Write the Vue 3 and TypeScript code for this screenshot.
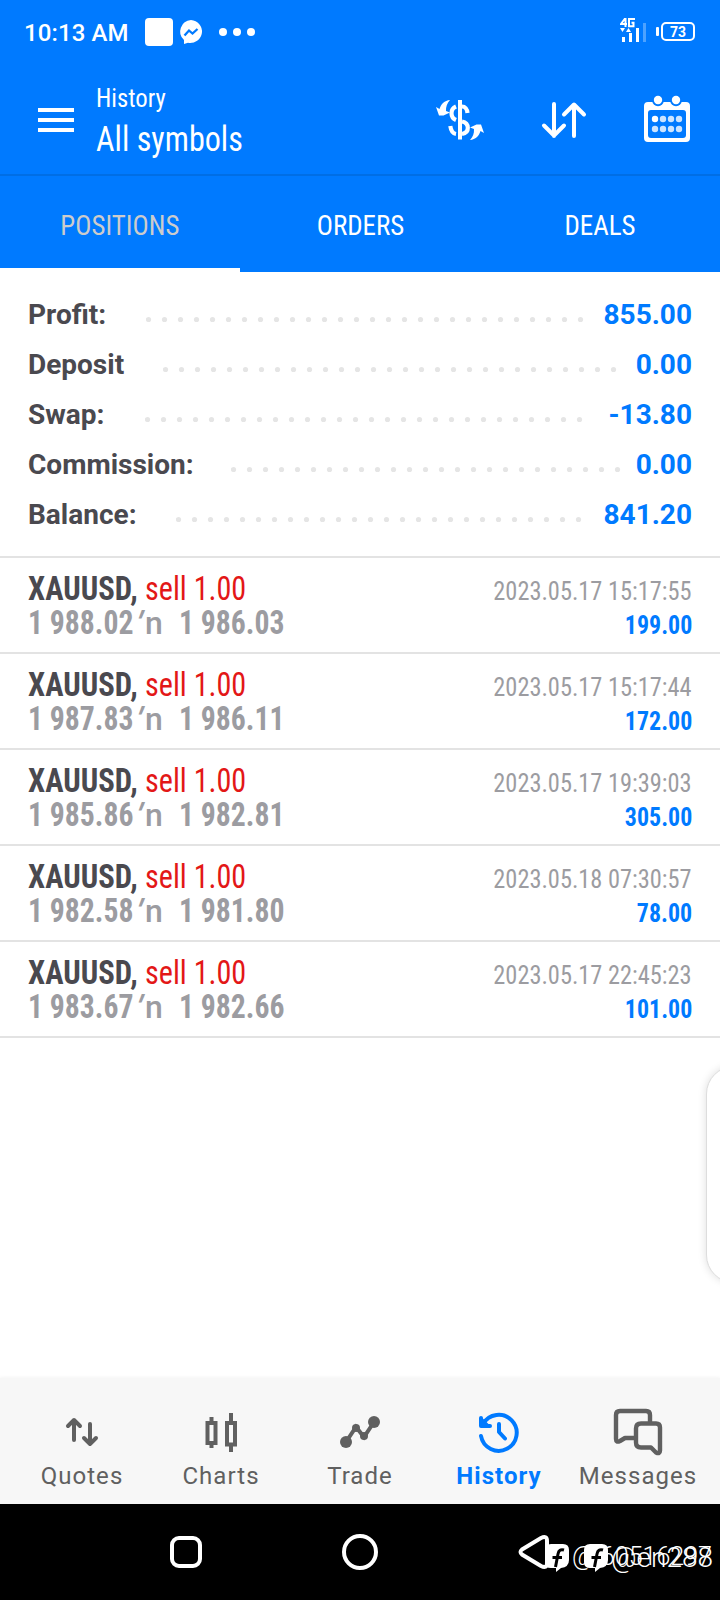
<script setup lang="ts">
interface Total { label: string; value: string; start: number; count: number }
interface Deal { open: string; close: string; time: string; profit: string }

const totals: Total[] = [
  { label: 'Profit:', value: '855.00', start: 146, count: 28 },
  { label: 'Deposit', value: '0.00', start: 163, count: 29 },
  { label: 'Swap:', value: '-13.80', start: 145, count: 28 },
  { label: 'Commission:', value: '0.00', start: 231, count: 25 },
  { label: 'Balance:', value: '841.20', start: 176, count: 26 },
]
const deals: Deal[] = [
  { open: '1 988.02', close: '1 986.03', time: '2023.05.17 15:17:55', profit: '199.00' },
  { open: '1 987.83', close: '1 986.11', time: '2023.05.17 15:17:44', profit: '172.00' },
  { open: '1 985.86', close: '1 982.81', time: '2023.05.17 19:39:03', profit: '305.00' },
  { open: '1 982.58', close: '1 981.80', time: '2023.05.18 07:30:57', profit: '78.00' },
  { open: '1 983.67', close: '1 982.66', time: '2023.05.17 22:45:23', profit: '101.00' },
]
const tabs = ['POSITIONS', 'ORDERS', 'DEALS']
</script>

<template>
  <div class="screen">
    <div class="status">
      <span class="clock">10:13 AM</span>
      <svg class="notices" width="112" height="30" viewBox="145 17 112 30" fill="#fff">
        <rect x="145" y="18" width="28" height="28" rx="4" />
        <path d="M191 20a12 11.500 0 1 1-3 22.800L184 44v-4a11.500 11.500 0 0 1 7-20z" />
        <path d="M184.500 35.500l4.500-5 3.500 3 5-4.500" fill="none" stroke="#007aff" stroke-width="2.300" />
        <circle cx="223" cy="32" r="4" /><circle cx="237" cy="32" r="4" /><circle cx="251" cy="32" r="4" />
      </svg>
      <svg class="signal" width="76" height="26" viewBox="620 17 76 26" fill="#fff">
        <path d="M625 18.500l-4 5.500h6M625.500 18v9M634 20v-1h-5v7.300h4.500v-3.500h-2" fill="none" stroke="#fff" stroke-width="2" />
        <path d="M620 28h5l-2.500 4zM626 32h5l-2.500-4z" />
        <rect x="622" y="37" width="3" height="5" /><rect x="629" y="33" width="3" height="9" />
        <rect x="636" y="28" width="3" height="14" /><rect x="643" y="23" width="3" height="19" opacity=".3" />
        <rect x="656" y="27" width="3" height="9" rx="1" />
        <rect x="662" y="23" width="32" height="17" rx="4" fill="none" stroke="#fff" stroke-width="2" />
        <text x="670" y="37" textLength="16" lengthAdjust="spacingAndGlyphs" class="battery">73</text>
      </svg>
    </div>

    <header class="header">
      <svg class="menu" width="36" height="24" viewBox="0 0 36 24" fill="#fff">
        <path d="M0 0h36v4H0zM0 10h36v4H0zM0 20h36v4H0z" />
      </svg>
      <div class="titles">
        <div class="sub cond">History</div>
        <div class="main cond">All symbols</div>
      </div>
      <svg class="actions" width="256" height="50" viewBox="436 94 256 50" fill="none" stroke="#fff">
        <path d="M460 100v39.500" stroke-width="4" />
        <path d="M467.500 113c-.3-4-2.500-6.500-5.500-6.500M456 106.500c-6 2.500-6 11 0 13.500M462 121.500c7.500 1.500 8 11 0 12.500M456 134c-3-.5-5-3-5.700-8" stroke-width="4.200" />
        <path d="M450 100c-5.500.5-9 4-10.500 9l-3.500-2 3 8.500h4.500l6.500-3-4-1.500c-.2-4.500 1-7.500 4-11z" fill="#fff" stroke="none" />
        <path d="M470 140c5.500-.5 9-4 10.500-9l3.500 2-3-8.500h-4.500l-6.500 3 4 1.500c.2 4.500-1 7.500-4 11z" fill="#fff" stroke="none" />
        <path d="M554 104v32M544 125.500l10 10 10-10M574 136v-31M564 114.500l10-10 10 10" stroke-width="4" stroke-linecap="round" stroke-linejoin="round" />
        <path fill="#fff" stroke="none" fill-rule="evenodd" d="M648 102h38q4 0 4 4v32q0 4-4 4h-38q-4 0-4-4v-32q0-4 4-4zM651 110q-3 0-3 3v22q0 3 3 3h32q3 0 3-3v-22q0-3-3-3z" />
        <circle cx="658" cy="100.500" r="5.800" fill="#007aff" stroke="none" /><circle cx="676" cy="100.500" r="5.800" fill="#007aff" stroke="none" />
        <circle cx="658" cy="100" r="4.200" fill="#fff" stroke="none" /><circle cx="676" cy="100" r="4.200" fill="#fff" stroke="none" />
        <g fill="#cce4ff" stroke="none">
          <circle cx="655" cy="119" r="3.200" fill="#fff" /><circle cx="663" cy="119" r="3.200" /><circle cx="671" cy="119" r="3.200" /><circle cx="679" cy="119" r="3.200" />
          <circle cx="655" cy="129" r="3.200" /><circle cx="663" cy="129" r="3.200" /><circle cx="671" cy="129" r="3.200" /><circle cx="679" cy="129" r="3.200" />
        </g>
      </svg>
    </header>

    <nav class="tabs">
      <div v-for="(t, i) in tabs" :key="t" class="tab" :class="{ active: i === 0 }"><span class="cond">{{ t }}</span></div>
    </nav>

    <section class="totals">
      <div v-for="t in totals" :key="t.label" class="total">
        <span class="label" :style="{ width: `${t.start - 28}px` }">{{ t.label }}</span>
        <svg :width="t.count * 16" height="50" fill="#e5e5e5">
          <circle v-for="n in t.count" :key="n" :cx="n * 16 - 13.5" cy="29.500" r="2.600" />
        </svg>
        <span class="value">{{ t.value }}</span>
      </div>
    </section>

    <section class="deals">
      <article v-for="d in deals" :key="d.time" class="deal">
        <div class="line">
          <span class="name"><b class="cond symbol">XAUUSD,</b><span class="side cond">sell 1.00</span></span>
          <span class="time cond">{{ d.time }}</span>
        </div>
        <div class="line">
          <span class="prices"><b class="cond price">{{ d.open }}</b><span class="arrow"><i>'</i>n</span><b class="cond price">{{ d.close }}</b></span>
          <b class="profit cond">{{ d.profit }}</b>
        </div>
      </article>
    </section>

    <div class="handle"></div>

    <nav class="bottom">
      <div class="item">
        <svg width="59" height="50" viewBox="52 1408 59 50" fill="none" stroke="#606060" stroke-width="4" stroke-linecap="round" stroke-linejoin="round"><path d="M74 1440v-20M68 1426l6-6 6 6M90 1424v20M84 1438l6 6 6-6" /></svg>
        <span>Quotes</span>
      </div>
      <div class="item">
        <svg width="59" height="50" viewBox="191 1408 59 50" fill="none" stroke="#606060" stroke-width="4"><path d="M207.500 1423h8v20h-8zM227 1423h8v21.500h-8zM211.500 1417v6M211.500 1443v5M231 1413v10M231 1445v7" /></svg>
        <span>Charts</span>
      </div>
      <div class="item">
        <svg width="59" height="50" viewBox="330 1408 59 50" fill="#606060"><path d="M346 1442l10-15 8 10 10-15" fill="none" stroke="#606060" stroke-width="4" /><circle cx="346" cy="1442" r="6" /><circle cx="356" cy="1428" r="4" /><circle cx="364" cy="1436" r="4" /><circle cx="374" cy="1422" r="6" /></svg>
        <span>Trade</span>
      </div>
      <div class="item on">
        <svg width="59" height="50" viewBox="469 1408 59 50" fill="none" stroke="#007aff" stroke-width="4" stroke-linecap="round" stroke-linejoin="round"><path d="M483 1424a18 18 0 1 1-2 12M481 1418v8h9M499 1424v8l6 6.500" /><path d="M481 1418l8 8h-8z" fill="#007aff" stroke-width="2" /></svg>
        <span>History</span>
      </div>
      <div class="item">
        <svg width="59" height="50" viewBox="608 1408 59 50" fill="none" stroke="#606060" stroke-width="4.400" stroke-linejoin="round"><path d="M650 1422v-7q0-4-4-4h-26q-4 0-4 4v24q0 4 4 2l5-3h10M641 1423.500h15q4 0 4 4v23q0 4-4 2l-5-5h-10q-5 0-5-5v-14q0-5 5-5z" /></svg>
        <span>Messages</span>
      </div>
    </nav>

    <div class="system">
      <svg width="720" height="96" viewBox="0 1504 720 96" fill="none" stroke="#fff" stroke-width="4">
        <rect x="172" y="1538" width="28" height="28" rx="7" />
        <circle cx="360" cy="1552" r="16" />
        <path d="M522 1549.500l19-11.500q6-3 6 3v22q0 6-6 3l-19-11.500q-3-2.500 0-5z" />
        <g class="mark">
          <text x="572" y="1565" font-size="25" textLength="140" lengthAdjust="spacingAndGlyphs">@.60516297</text>
          <text x="611" y="1566.500" font-size="27" textLength="102" lengthAdjust="spacingAndGlyphs">@en288</text>
        </g>
        <g v-for="x in [545, 584]" :key="x" :transform="`translate(${x} 1544)`" stroke="none">
          <path d="M6 0h12q6 0 6 6v10q0 7-8 8l-5 4v-4H6q-6 0-6-6V6q0-6 6-6z" fill="#fff" />
          <path d="M19 6q-5-1.500-6 4L10.500 23M7.500 13.500h9.500" fill="none" stroke="#000" stroke-width="3" />
        </g>
      </svg>
    </div>
  </div>
</template>

<style>
body { margin: 0; background: #fff; }
</style>
<style scoped>
.screen { width: 720px; height: 1600px; position: relative; overflow: hidden; background: #fff; font-family: Roboto, sans-serif; display: flex; flex-direction: column; }
.cond { font-family: "Roboto Condensed", Roboto, sans-serif; font-stretch: 75%; white-space: pre; display: inline-block; transform-origin: 0 50%; }
.status { height: 64px; background: #007aff; color: #fff; display: flex; align-items: flex-start; flex: none; }
.clock { margin: 19px 0 0 24px; width: 121px; font-size: 24px; font-weight: 500; line-height: 28px; letter-spacing: .1px; }
.notices, .signal { margin-top: 17px; }
.signal { margin-left: auto; margin-right: 24px; }
.battery { font: 700 15.500px Roboto, sans-serif; }
.header { height: 110px; border-bottom: 2px solid #006ee5; background: #007aff; color: #fff; display: flex; flex: none; }
.menu { margin: 44px 22px 0 38px; }
.titles { width: 340px; padding-top: 16px; display: flex; flex-direction: column; align-items: flex-start; }
.sub { font-size: 26px; line-height: 37px; transform: scaleX(.95); }
.main { font-size: 35px; line-height: 45px; transform: scaleX(.918); }
.actions { margin-top: 30px; overflow: visible; }
.tabs { height: 96px; background: #007aff; color: #fff; display: flex; flex: none; }
.tab { flex: 1; box-sizing: border-box; height: 96px; text-align: center; font-size: 28px; line-height: 100px; border-bottom: 0 solid #fff; }
.tab .cond { transform-origin: 50% 50%; transform: scaleX(.962); }
.tab.active { color: #ccc; border-bottom-width: 4px; }
.totals { height: 284px; padding: 18px 28px 0; box-sizing: border-box; flex: none; }
.total { height: 50px; display: flex; line-height: 50px; font-size: 28px; font-weight: 700; color: #4a494f; }
.label { flex: none; }
.value { margin-left: auto; color: #007aff; }
.deals { border-top: 2px solid #e3e3e3; }
.deal { height: 96px; padding: 14px 28px 0; box-sizing: border-box; border-bottom: 2px solid #e3e3e3; }
.line { display: flex; justify-content: space-between; height: 34px; line-height: 34px; align-items: baseline; }
.name, .prices { font-size: 32px; color: #4a494f; display: flex; }
.symbol { width: 117px; transform: scale(.958, 1.03); }
.side { color: #e31717; transform: scale(.942, 1.03); }
.time { font-size: 26px; color: #9c9ca1; transform-origin: 100% 50%; transform: scaleX(.937); }
.prices { color: #9c9ca1; }
.price { width: 111px; transform: scale(.928, 1.03); }
.arrow { width: 40px; font-weight: 500; }
.arrow i { display: inline-block; width: 6px; font-style: normal; font-weight: 700; transform: translateX(-3px) skewX(-20deg); }
.profit { font-size: 26px; color: #007aff; transform-origin: 100% 50%; transform: scaleX(.92); }
.handle { position: absolute; left: 706px; top: 1066px; width: 80px; height: 215px; border-radius: 28px; background: #fff; border: 1px solid #ddd; box-shadow: 0 0 9px #0002; }
.bottom { margin-top: auto; height: 126px; box-sizing: border-box; padding: 30px 13px 0 12px; background: #f7f7f7; box-shadow: 0 0 4px #0001; display: flex; flex: none; }
.item { flex: 1 1 0; min-width: 0; display: flex; flex-direction: column; align-items: center; color: #606060; font-size: 24px; line-height: 36px; letter-spacing: 1.050px; }
.item span { padding-left: 1px; }
.on { color: #007aff; font-weight: 700; }
.system { height: 96px; background: #000; flex: none; }
.system svg { display: block; }
.mark { font-family: Roboto, sans-serif; font-weight: 300; fill: #fff; stroke: none; }
</style>
